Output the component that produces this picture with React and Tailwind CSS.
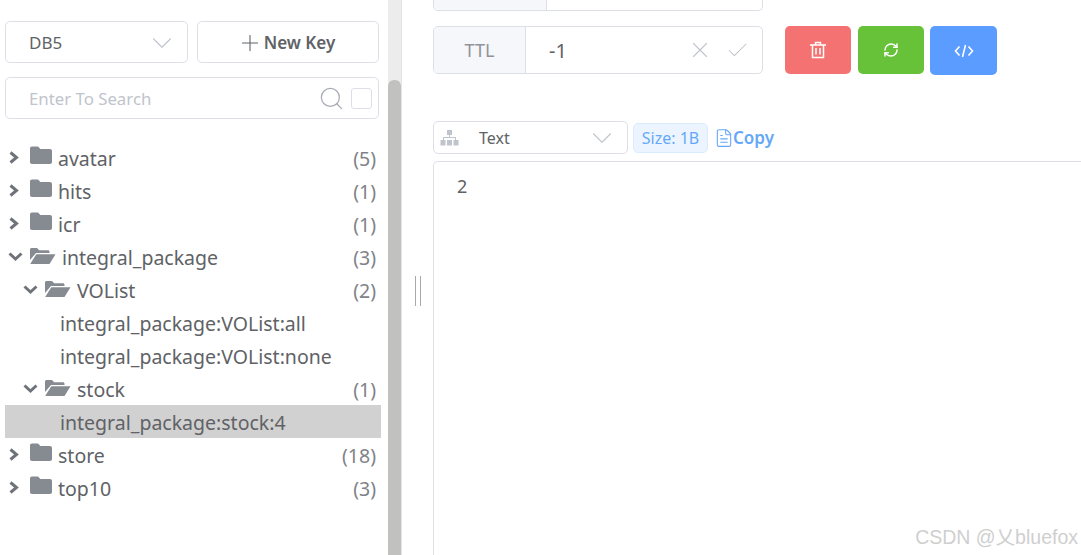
import React from "react";
import { ChevronDown, Plus, Search, X, Check, FileText, RefreshCw } from "lucide-react";

function Arrow({ open }) {
  return (
    <svg width="17" height="14" viewBox="0 0 17 14" className="shrink-0">
      {open
        ? <path d="M2.500 3.500 8.500 9l6-5.500" fill="none" stroke="#6f7379" strokeWidth="3" />
        : <path d="M3.500 1.500 9.500 6.500l-6 5" fill="none" stroke="#6f7379" strokeWidth="3" />}
    </svg>
  );
}

function Folder({ open }) {
  return open ? (
    <svg width="26" height="20" viewBox="0 0 26 20" className="shrink-0 -translate-y-[1px]">
      <path d="M0 3.500C0 2.700.7 2 1.500 2h5.500l2.200 2.200h8.800c.8 0 1.500.7 1.500 1.500V7H6L0 14z" fill="#868a91" />
      <path d="M6.300 8.300H25.500L19.500 18H.2z" fill="#868a91" />
    </svg>
  ) : (
    <svg width="23" height="20" viewBox="0 0 23 20" className="shrink-0 -translate-y-[2px]">
      <path d="M0 2.500C0 1.400.8.5 2 .5h6l2.400 2.500H20c1.100 0 2 .9 2 2V16c0 1.100-.9 2-2 2H2c-1.200 0-2-.9-2-2z" fill="#868a91" />
    </svg>
  );
}

function Row({ depth = 0, open, label, count, leaf, active }) {
  return (
    <div className={`flex h-[33px] items-center pr-[5px] text-[19.5px] text-[#606266] ${active ? "bg-[#d1d1d1]" : ""} ${depth === 1 ? "pl-[17px]" : "pl-[2px]"}`}>
      {leaf ? (
        <span className="pl-[53px] pt-[2px]">{label}</span>
      ) : (
        <>
          <Arrow open={open} />
          <span className="ml-[6px] flex"><Folder open={open} /></span>
          <span className={`pt-[2px] ${open ? "ml-[6px]" : "ml-[5px]"}`}>{label}</span>
          <span className="ml-auto pt-[2px] text-[#7f8288]">{count}</span>
        </>
      )}
    </div>
  );
}

export default function App() {
  return (
    <div className="relative flex h-[555px] w-[1081px] overflow-hidden bg-white font-['Noto_Sans','Open_Sans',sans-serif] text-[#606266]">
      <aside className="w-[388px] shrink-0 pt-[21px] pl-[5px] pr-[7px]">
        <div className="flex gap-[9px]">
          <div className="flex h-[42px] w-[183px] items-center justify-between rounded-[5px] border border-[#dcdfe6] pl-[23px] pr-[8px] pt-[2px] text-[17px]">
            <span>DB5</span>
            <ChevronDown size={34} strokeWidth={0.75} color="#c0c4cc" />
          </div>
          <div className="flex h-[42px] w-[182px] items-center justify-center gap-[1px] rounded-[5px] border border-[#dcdfe6] pr-[4px] pt-[2px] text-[17px] font-semibold text-[#606266]">
            <Plus size={26} strokeWidth={1} />
            <span>New Key</span>
          </div>
        </div>
        <div className="mt-[14px] flex h-[42px] w-[374px] items-center rounded-[5px] border border-[#dcdfe6] pl-[23px] pr-[6px] text-[16.800px] text-[#c0c4cc]">
          <span className="pt-[1px]">Enter To Search</span>
          <Search className="ml-auto" size={27} strokeWidth={1.1} color="#a8abb2" />
          <div className="ml-[6px] h-[21px] w-[21px] rounded-[3px] border border-[#dcdfe6]" />
        </div>
        <div className="mt-[22px]">
          <Row label="avatar" count="(5)" />
          <Row label="hits" count="(1)" />
          <Row label="icr" count="(1)" />
          <Row open label="integral_package" count="(3)" />
          <Row open depth={1} label="VOList" count="(2)" />
          <Row leaf label="integral_package:VOList:all" />
          <Row leaf label="integral_package:VOList:none" />
          <Row open depth={1} label="stock" count="(1)" />
          <Row leaf active label="integral_package:stock:4" />
          <Row label="store" count="(18)" />
          <Row label="top10" count="(3)" />
        </div>
      </aside>

      <div className="w-[13px] shrink-0 bg-[#ececec] pt-[80px]">
        <div className="h-full w-full rounded-t-[6px] bg-[#c1c1bf]" />
      </div>

      <main className="relative min-w-0 flex-1 border-l border-[#e4e4e4] pl-[31px]">
        <div className="absolute left-[13px] top-[276px] h-[30px] w-[6px] border-x border-[#a9a9a9]" />
        <div className="flex h-[11px] w-[330px] overflow-hidden rounded-b-[5px] border border-t-0 border-[#dcdfe6]">
          <div className="w-[113px] border-r border-[#dcdfe6] bg-[#f5f7fa]" />
        </div>
        <div className="mt-[15px] flex items-start">
          <div className="flex h-[48px] w-[330px] overflow-hidden rounded-[5px] border border-[#dcdfe6]">
            <div className="flex w-[92px] items-center justify-center border-r border-[#dcdfe6] bg-[#f5f7fa] text-[18px] text-[#909399]">TTL</div>
            <div className="flex flex-1 items-center pl-[23px] pr-[12px] text-[20px]">
              <span className="pt-[1px]">-1</span>
              <X className="ml-auto" size={26} strokeWidth={1} color="#c0c4cc" />
              <Check className="ml-[12px]" size={25} strokeWidth={1} color="#c0c4cc" />
            </div>
          </div>
          <div className="ml-[22px] flex">
            <div className="flex h-[48px] w-[66px] items-center justify-center rounded-[5px] bg-[#f47272] text-white">
              <svg width="18" height="18" viewBox="0 0 18 18" fill="none" stroke="currentColor" strokeWidth="1.500">
                <path d="M1 4h16M6.500 3.500V1.500h5v2M3.500 4.500v12h11v-12M7 7v6.500M11 7v6.500" />
              </svg>
            </div>
            <div className="ml-[7px] flex h-[48px] w-[66px] items-center justify-center rounded-[5px] bg-[#67c23a] text-white">
              <RefreshCw size={16} strokeWidth={2.2} />
            </div>
            <div className="ml-[6px] flex h-[49px] w-[67px] items-center justify-center rounded-[5px] bg-[#5a9cff] text-white">
              <svg width="20" height="14" viewBox="0 0 20 14" fill="none" stroke="currentColor" strokeWidth="1.600">
                <path d="M5.500 2.500 1.500 7l4 4.500M14.500 2.500l4 4.500-4 4.500M11.500 1 8.500 13" />
              </svg>
            </div>
          </div>
        </div>
        <div className="mt-[46px] flex items-center">
          <div className="flex h-[33px] w-[195px] items-center rounded-[5px] border border-[#dcdfe6] pl-[6px] pr-[8px] text-[16px]">
            <svg width="19" height="16" viewBox="0 0 19 16" fill="#c0c4cc">
              <rect x="7" y="0" width="5" height="5" />
              <rect x="9" y="4" width="1" height="4" />
              <rect x="3" y="7" width="13" height="1" />
              <rect x="3" y="7" width="1" height="3" />
              <rect x="15" y="7" width="1" height="3" />
              <rect x="0.500" y="10" width="5" height="5.500" />
              <rect x="7" y="10" width="5" height="5.500" />
              <rect x="13.500" y="10" width="5" height="5.500" />
            </svg>
            <span className="ml-[20px]">Text</span>
            <ChevronDown className="ml-auto" size={34} strokeWidth={0.75} color="#c0c4cc" />
          </div>
          <div className="ml-[5px] flex h-[30px] w-[75px] items-center justify-center rounded-[5px] border border-[#d9ecff] bg-[#ecf5ff] text-[16px] text-[#66a8f8]">Size: 1B</div>
          <div className="ml-[6px] flex items-center text-[17px] font-semibold text-[#66a8f8]">
            <FileText size={20} strokeWidth={1.3} />
            <span className="-ml-[1px]">Copy</span>
          </div>
        </div>
        <div className="mt-[7px] h-[400px] rounded-tl-[5px] border-l border-t border-[#dcdfe6] pl-[23px] pt-[11px] text-[18px] text-[#606266]">2</div>
      </main>

      <div className="absolute bottom-[3px] right-[3px] font-['Liberation_Sans','Noto_Sans_CJK_SC',sans-serif] text-[19.500px] text-[#cfcfcf]">CSDN @乂bluefox</div>
    </div>
  );
}
